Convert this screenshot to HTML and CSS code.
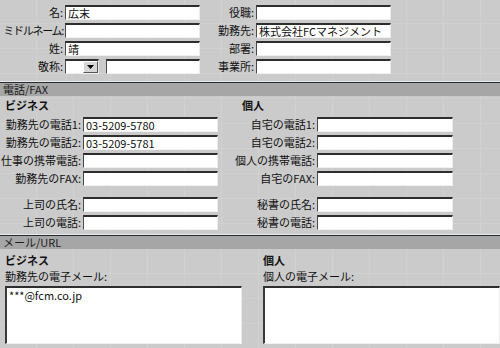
FILE: index.html
```html
<!DOCTYPE html>
<html lang="ja">
<head>
    <meta charset="UTF-8">
    <title>連絡先</title>
    <link rel="stylesheet" href="styles.css">
</head>
<body>
    <div class="form">
        <section class="names">
            <label>名:</label>
            <input type="text" class="field" value="広末">
            <label>役職:</label>
            <input type="text" class="field">

            <label class="tight">ミドルネーム:</label>
            <input type="text" class="field">
            <label>勤務先:</label>
            <input type="text" class="field" value="株式会社FCマネジメント">

            <label>姓:</label>
            <input type="text" class="field" value="靖">
            <label>部署:</label>
            <input type="text" class="field">

            <label>敬称:</label>
            <div class="title-row">
                <span class="combo">
                    <span class="combo-box"></span>
                    <span class="combo-btn">
                        <svg width="7" height="4" viewBox="0 0 7 4"><path d="M0 0h7L3.5 4z" fill="#000"/></svg>
                    </span>
                </span>
                <input type="text" class="field suffix">
            </div>
            <label>事業所:</label>
            <input type="text" class="field">
        </section>

        <div class="bar">電話/FAX</div>

        <section class="phones">
            <div class="col business">
                <h3>ビジネス</h3>
                <div class="rows">
                    <label>勤務先の電話1:</label>
                    <input type="text" class="field" value="03-5209-5780">
                    <label>勤務先の電話2:</label>
                    <input type="text" class="field" value="03-5209-5781">
                    <label>仕事の携帯電話:</label>
                    <input type="text" class="field">
                    <label>勤務先のFAX:</label>
                    <input type="text" class="field">
                    <label class="gap">上司の氏名:</label>
                    <input type="text" class="field gap">
                    <label>上司の電話:</label>
                    <input type="text" class="field">
                </div>
            </div>
            <div class="col personal">
                <h3>個人</h3>
                <div class="rows">
                    <label>自宅の電話1:</label>
                    <input type="text" class="field">
                    <label>自宅の電話2:</label>
                    <input type="text" class="field">
                    <label>個人の携帯電話:</label>
                    <input type="text" class="field">
                    <label>自宅のFAX:</label>
                    <input type="text" class="field">
                    <label class="gap">秘書の氏名:</label>
                    <input type="text" class="field gap">
                    <label>秘書の電話:</label>
                    <input type="text" class="field">
                </div>
            </div>
        </section>

        <div class="bar">メール/URL</div>

        <section class="mail">
            <div class="col">
                <h3>ビジネス</h3>
                <p class="caption">勤務先の電子メール:</p>
                <textarea class="memo">***@fcm.co.jp</textarea>
            </div>
            <div class="col">
                <h3>個人</h3>
                <p class="caption">個人の電子メール:</p>
                <textarea class="memo"></textarea>
            </div>
        </section>
    </div>
</body>
</html>
```

FILE: styles.css
```css
body {
    margin: 0;
    padding: 0;
    background-color: #cbcbcb;
    color: #111;
    font-family: "Noto Sans CJK JP", "Liberation Sans", sans-serif;
    font-size: 11px;
    overflow: hidden;
}
.form {
    width: 500px;
    height: 348px;
    background-color: #cbcbcb;
    background-image:
        repeating-linear-gradient(90deg, transparent 0 36px, #d1d1d1 36px 37px),
        repeating-linear-gradient(0deg, transparent 0 24px, #d0d0d0 24px 25px);
}
label {
    text-align: right;
    line-height: 15px;
    white-space: nowrap;
}
label.tight {
    letter-spacing: -1.3px;
}
.field {
    box-sizing: border-box;
    height: 15px;
    margin: 0;
    padding: 0 2px;
    background: #fff;
    border-top: 2px solid #2e2e2e;
    border-left: 1px solid #4a4a4a;
    border-right: 1px solid #ececec;
    border-bottom: 1px solid #f2f2f2;
    font-family: inherit;
    font-size: 11px;
    line-height: 12px;
    color: #111;
    outline: none;
}

/* 名前 */
.names {
    display: grid;
    grid-template-columns: 63px 135px 52px 135px;
    column-gap: 2px;
    row-gap: 3px;
    padding: 5px 0 8px 0;
}
.title-row {
    display: flex;
    gap: 7px;
}
.combo {
    display: flex;
    box-sizing: border-box;
    width: 41px;
    height: 15px;
    background: #fff;
    border-top: 2px solid #2e2e2e;
    border-left: 1px solid #4a4a4a;
    border-right: 1px solid #ececec;
    border-bottom: 1px solid #f2f2f2;
}
.combo-box {
    flex: 1;
}
.combo-btn {
    display: flex;
    align-items: center;
    justify-content: center;
    width: 13px;
    background: #d6d6d6;
    border-top: 1px solid #fff;
    border-left: 1px solid #fff;
    border-right: 1px solid #555;
    border-bottom: 1px solid #555;
}
.suffix {
    width: 94px;
}

/* 見出しバー */
.bar {
    height: 13px;
    line-height: 13px;
    padding-left: 3px;
    background: #a6a6a6;
    border-top: 1px solid #2a2a2a;
    box-shadow: 0 -1px 0 #e4ebf0;
    color: #1c1c1c;
}

h3 {
    margin: 0;
    font-size: 11px;
    font-weight: bold;
    line-height: 14px;
}

/* 電話/FAX */
.phones {
    display: grid;
    grid-template-columns: 230px 1fr;
    padding: 2px 0 5px 0;
}
.phones .rows {
    display: grid;
    row-gap: 3px;
    margin-top: 5px;
}
.business h3 {
    padding-left: 5px;
}
.business .rows {
    grid-template-columns: 81px 135px;
    column-gap: 2px;
}
.personal h3 {
    padding-left: 12px;
}
.personal .rows {
    grid-template-columns: 85px 136px;
    column-gap: 2px;
}
.rows .gap {
    margin-top: 8px;
}

/* メール/URL */
.mail {
    display: grid;
    grid-template-columns: 237px 1fr;
    column-gap: 21px;
    padding: 3px 0 0 5px;
}
.mail h3 {
    line-height: 16px;
}
.caption {
    margin: 1px 0 3px 0;
    line-height: 14px;
}
.memo {
    display: block;
    box-sizing: border-box;
    width: 100%;
    height: 58px;
    margin: 0;
    padding: 1px 2px;
    resize: none;
    background: #fff;
    border-top: 2px solid #2e2e2e;
    border-left: 2px solid #3a3a3a;
    border-right: 1px solid #ececec;
    border-bottom: 1px solid #f2f2f2;
    font-family: inherit;
    font-size: 11px;
    line-height: 13px;
    color: #111;
    overflow: hidden;
    outline: none;
}
```
